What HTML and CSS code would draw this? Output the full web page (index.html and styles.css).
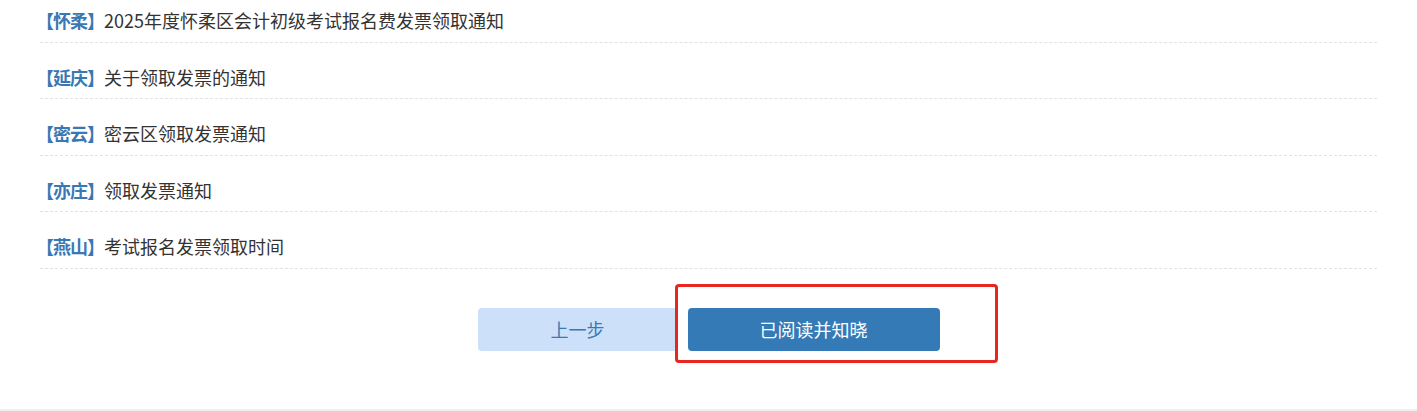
FILE: index.html
```html
<!DOCTYPE html>
<html lang="zh-CN">
<head>
<meta charset="utf-8">
<title>通知</title>
<link rel="stylesheet" href="styles.css">
</head>
<body>
<div class="page">
  <ul class="notice-list">
    <li class="notice"><span class="area">【怀柔】</span><span class="title">2025年度怀柔区会计初级考试报名费发票领取通知</span></li>
    <li class="notice"><span class="area">【延庆】</span><span class="title">关于领取发票的通知</span></li>
    <li class="notice"><span class="area">【密云】</span><span class="title">密云区领取发票通知</span></li>
    <li class="notice"><span class="area">【亦庄】</span><span class="title">领取发票通知</span></li>
    <li class="notice"><span class="area">【燕山】</span><span class="title">考试报名发票领取时间</span></li>
  </ul>
  <div class="actions">
    <button class="btn btn-prev">上一步</button>
    <div class="highlight-wrap">
      <button class="btn btn-primary">已阅读并知晓</button>
      <span class="highlight"></span>
    </div>
  </div>
</div>
<div class="footer"></div>
</body>
</html>
```

FILE: styles.css
```css
html, body {
  margin: 0;
  padding: 0;
  background: #fff;
}
body {
  font-family: "Microsoft YaHei", "Noto Sans CJK SC", "Noto Sans", sans-serif;
  font-size: 18px;
  color: #333;
  height: 411px;
  overflow: hidden;
}
.page {
  display: flow-root;
  padding: 0 40px;
  height: 409px;
  box-sizing: border-box;
}
.notice-list {
  list-style: none;
  margin: -14px 0 0 0;
  padding: 0;
}
.notice {
  box-sizing: border-box;
  height: 56.5px;
  padding-top: 13px;
  display: flex;
  align-items: center;
  border-bottom: 1px dashed #e2e2e2;
  white-space: nowrap;
}
.area {
  color: #3a78b4;
  font-weight: bold;
  letter-spacing: -1px;
  margin-left: -4px;
}
.title {
  color: #333;
}
.actions {
  display: flex;
  justify-content: center;
  gap: 10px;
  margin-top: 39px;
}
.btn {
  height: 43px;
  border: none;
  border-radius: 4px;
  font-family: inherit;
  font-size: 18px;
  padding: 0;
  cursor: pointer;
}
.btn-prev {
  width: 200px;
  background: #cce1f9;
  color: #3a78b4;
}
.btn-primary {
  width: 252px;
  background: #337ab7;
  color: #fff;
}
.highlight-wrap {
  position: relative;
  display: flex;
}
.highlight {
  position: absolute;
  left: -13px;
  top: -24px;
  right: -58px;
  bottom: -12px;
  border: 3px solid #e8261f;
  border-radius: 4px;
  pointer-events: none;
}
.footer {
  height: 2px;
  background: #efefef;
}
```
